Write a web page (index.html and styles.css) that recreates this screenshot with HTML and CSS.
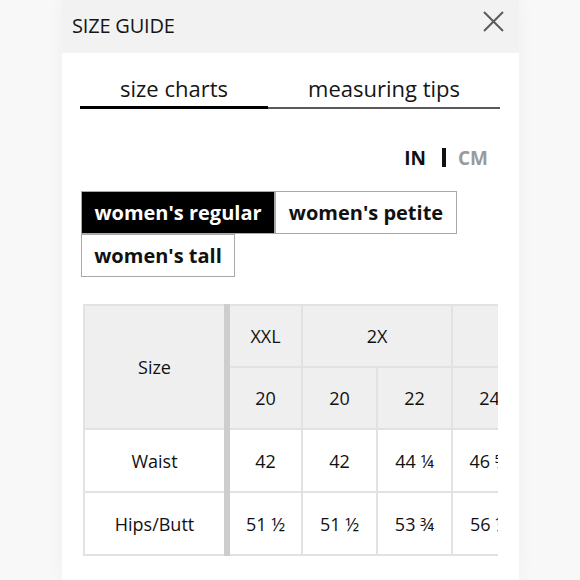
FILE: index.html
```html
<!DOCTYPE html>
<html lang="en">
<head>
<meta charset="utf-8">
<title>Size Guide</title>
<link rel="stylesheet" href="styles.css">
</head>
<body>
<div class="modal">
  <div class="header">
    <div class="title">SIZE GUIDE</div>
    <svg class="close" width="21" height="21" viewBox="0 0 21 21" aria-label="close">
      <path d="M1 1 L20 20 M20 1 L1 20" stroke="#5c5c5c" stroke-width="2" fill="none"/>
    </svg>
  </div>
  <div class="content">
    <div class="tabs">
      <div class="tab active">size charts</div>
      <div class="tab">measuring tips</div>
    </div>
    <div class="units">
      <span class="unit on">IN</span>
      <span class="bar"></span>
      <span class="unit off">CM</span>
    </div>
    <div class="filters">
      <div class="fbtn selected w-reg">women's regular</div>
      <div class="fbtn w-pet">women's petite</div>
      <div class="fbtn w-tall">women's tall</div>
    </div>
    <div class="table-wrap">
      <table class="chart">
        <colgroup>
          <col class="c-first">
          <col class="c-n"><col class="c-n"><col class="c-n"><col class="c-n"><col class="c-n">
        </colgroup>
        <thead>
          <tr>
            <th class="first" rowspan="2">Size</th>
            <th>XXL</th>
            <th colspan="2">2X</th>
            <th colspan="2">3X</th>
          </tr>
          <tr>
            <th>20</th><th>20</th><th>22</th><th>24</th><th>26</th>
          </tr>
        </thead>
        <tbody>
          <tr>
            <td class="first">Waist</td>
            <td>42</td><td>42</td><td>44 ¼</td><td>46 ⅝</td><td>49</td>
          </tr>
          <tr>
            <td class="first">Hips/Butt</td>
            <td>51 ½</td><td>51 ½</td><td>53 ¾</td><td>56 ½</td><td>59</td>
          </tr>
        </tbody>
      </table>
    </div>
  </div>
</div>
</body>
</html>
```
FILE: styles.css
```css
html, body {
  margin: 0;
  padding: 0;
}
body {
  background: #f8f8f8;
  font-family: "Open Sans", "Liberation Sans", sans-serif;
  color: #161616;
  height: 580px;
  overflow: hidden;
}
.modal {
  margin-left: 62px;
  width: 457px;
  min-height: 580px;
  background: #ffffff;
  box-shadow: 0 0 18px rgba(0, 0, 0, 0.04);
}
.header {
  height: 53px;
  background: #f2f2f2;
  display: flex;
  justify-content: space-between;
  align-items: flex-start;
  padding: 0 15px 0 10px;
}
.title {
  font-size: 20px;
  line-height: 24px;
  padding-top: 14px;
  color: #151515;
  letter-spacing: -0.2px;
}
.close {
  margin-top: 11px;
  display: block;
}
.content {
  padding: 0 19px 0 18px;
}
.tabs {
  margin-top: 20px;
  display: flex;
  align-items: flex-end;
}
.tab {
  font-size: 22px;
  line-height: 30px;
  text-align: center;
  color: #151515;
  padding-bottom: 4px;
  border-bottom: 2px solid #5a5a5a;
  flex: 1;
}
.tab.active {
  flex: 0 0 188px;
  padding-bottom: 3px;
  border-bottom: 3px solid #000;
}
.units {
  margin-top: 36px;
  margin-right: 12px;
  display: flex;
  justify-content: flex-end;
  align-items: flex-start;
  font-weight: 700;
  font-size: 19px;
  line-height: 26px;
}
.unit.on { color: #111; }
.unit.off { color: #9a9a9a; }
.bar {
  width: 4px;
  height: 19px;
  margin: 3px 12px 0 16px;
  background: #111;
}
.filters {
  margin-top: 20px;
  margin-left: 1px;
  display: flex;
  flex-wrap: wrap;
}
.fbtn {
  box-sizing: border-box;
  height: 43px;
  border: 1px solid #a9a9a9;
  font-weight: 700;
  font-size: 20px;
  line-height: 41px;
  text-align: center;
  color: #111;
  background: #fff;
  white-space: nowrap;
}
.fbtn.selected {
  background: #000;
  color: #fff;
}
.w-reg { width: 194px; }
.w-pet { width: 182px; }
.w-tall { width: 154px; }
.table-wrap {
  margin-top: 27px;
  margin-left: 3px;
  width: 415px;
  overflow: hidden;
}
.chart {
  border-collapse: collapse;
  table-layout: fixed;
  width: 518px;
  font-size: 18px;
  color: #111;
}
.c-first { width: 143px; }
.c-n { width: 75px; }
.chart th, .chart td {
  border: 2px solid #e2e2e2;
  height: 60px;
  padding: 0;
  text-align: center;
  font-weight: 400;
  white-space: nowrap;
}
.chart td {
  height: 61px;
  background: #ffffff;
}
.chart th {
  background: #efefef;
}
.chart .first {
  border-right: 6px solid #cdcdcd;
}
```
